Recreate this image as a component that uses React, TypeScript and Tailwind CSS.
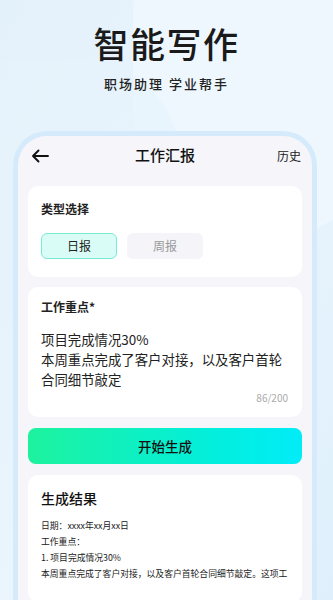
import React from "react";

export default function App() {
  return (
    <div
      className="relative w-[333px] h-[600px] overflow-hidden bg-gradient-to-br from-[#e3f1fb] via-[#eaf5fd] to-[#dff0fc]"
      style={{ fontFamily: '"Noto Sans CJK SC", "Noto Sans", sans-serif' }}
    >
      <div className="absolute -right-[60px] -top-[120px] w-[260px] h-[360px] rounded-full bg-[#f1f8fe] opacity-70" />
      <div className="absolute -left-[120px] top-[60px] w-[300px] h-[200px] rounded-full bg-[#e6f3fc] opacity-60" />
      <div className="relative flex flex-col items-center pt-[17px]">
        <div className="text-[35px] leading-[52px] tracking-[1.5px] text-[#1a1a1a] font-medium">智能写作</div>
        <div className="mt-[5px] text-[13px] leading-[20px] tracking-[2px] text-[#222] font-medium">职场助理 学业帮手</div>
      </div>
      <div className="relative ml-[13px] mr-[16px] mt-[37px] rounded-t-[34px] border-[5px] border-b-0 border-[#d5ebfb] bg-[#f6f6fa] h-[500px] overflow-hidden">
        <div className="grid grid-cols-[1fr_auto_1fr] items-center h-[38px] px-[10px] pt-[1px]">
          <svg width="18" height="14" viewBox="0 0 18 14" className="ml-[3px]">
            <path d="M17 7H2M7.5 1.5L2 7l5.5 5.5" fill="none" stroke="#111" strokeWidth="1.9" strokeLinecap="round" strokeLinejoin="round" />
          </svg>
          <div className="text-[15px] font-medium text-[#111]">工作汇报</div>
          <div className="text-[12px] text-[#222] text-right mr-[1px]">历史</div>
        </div>
        <div className="px-[10px] flex flex-col mt-[12px]">
          <div className="bg-white rounded-[10px] px-[13px] pt-[14px] pb-[18px]">
            <div className="text-[12px] font-bold text-[#222] leading-[18px]">类型选择</div>
            <div className="flex gap-[10px] mt-[15px]">
              <div className="w-[76px] h-[26px] rounded-[6px] border border-[#79ead6] bg-[#dafcf6] flex items-center justify-center text-[12px] text-[#222]">日报</div>
              <div className="w-[76px] h-[26px] rounded-[6px] bg-[#f5f5f9] flex items-center justify-center text-[12px] text-[#999]">周报</div>
            </div>
          </div>
          <div className="mt-[10px] bg-white rounded-[10px] px-[13px] pt-[11px] pb-[12px]">
            <div className="text-[12px] font-bold text-[#222] leading-[18px]">工作重点*</div>
            <div className="mt-[13px] text-[13.4px] leading-[20px] text-[#222] whitespace-nowrap">
              <div>项目完成情况30%</div>
              <div>本周重点完成了客户对接，以及客户首轮</div>
              <div>合同细节敲定</div>
            </div>
            <div className="text-right text-[10px] text-[#aaa] leading-[14px] mt-[2px] pr-[1px]">86/200</div>
          </div>
          <div className="mt-[11px] h-[36px] rounded-[8px] bg-gradient-to-r from-[#1df29d] to-[#02ecf8] flex items-center justify-center text-[13.5px] font-medium text-[#111]">开始生成</div>
          <div className="mt-[11px] bg-white rounded-[10px] px-[13px] pt-[11px] pb-[20px]">
            <div className="text-[14px] font-medium text-[#111] leading-[24px]">生成结果</div>
            <div className="mt-[8px] text-[8.8px] leading-[16px] text-[#222] whitespace-nowrap">
              <div>日期：xxxx年xx月xx日</div>
              <div>工作重点：</div>
              <div>1. 项目完成情况30%</div>
              <div>本周重点完成了客户对接，以及客户首轮合同细节敲定。这项工</div>
            </div>
          </div>
        </div>
      </div>
    </div>
  );
}
